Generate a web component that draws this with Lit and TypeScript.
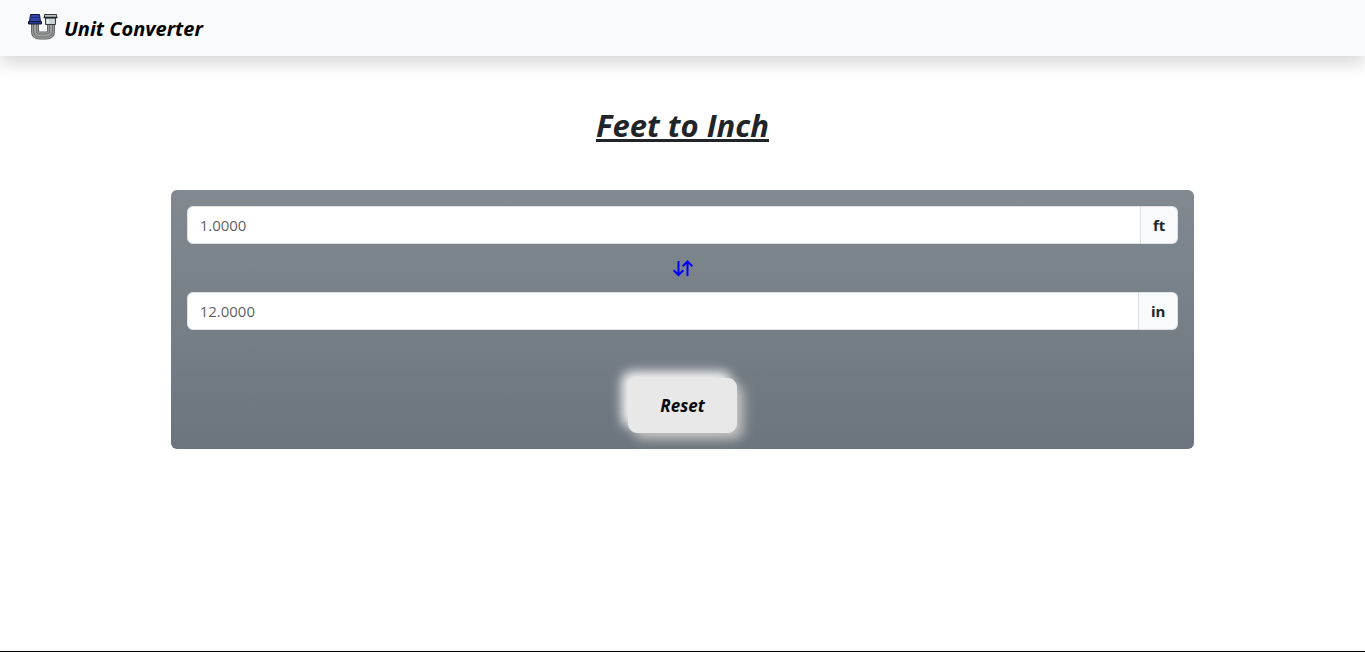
import { LitElement, html, css } from "lit";
import { customElement, state } from "lit/decorators.js";

@customElement("app-root")
export class AppRoot extends LitElement {
  static styles = css`
    :host {
      display: flex;
      flex-direction: column;
      box-sizing: border-box;
      min-height: 100vh;
      border-bottom: 1px solid #000;
      background: #fff;
      color: #212529;
      font-family: "Segoe UI", "Open Sans", "Noto Sans", sans-serif;
      font-size: 16px;
      line-height: 24px;
    }
    * {
      box-sizing: border-box;
    }
    .navbar {
      display: flex;
      align-items: center;
      height: 56px;
      padding: 2px 28px 0;
      background: #f8fafc;
      box-shadow: 0 8px 16px rgba(0, 0, 0, 0.15);
    }
    .brand {
      display: flex;
      align-items: center;
      gap: 6px;
      color: #000;
      font-size: 20px;
      font-weight: 700;
      font-style: italic;
      line-height: 30px;
      text-decoration: none;
    }
    .logo {
      width: 30px;
      height: 30px;
      margin-bottom: 4px;
    }
    .title {
      margin: 50px 0 46px;
      font-size: 31px;
      line-height: 38px;
      font-weight: 700;
      font-style: italic;
      text-align: center;
      text-decoration: underline;
      text-decoration-thickness: 3px;
      text-underline-offset: 2px;
      text-decoration-skip-ink: none;
    }
    .card {
      display: flex;
      flex-direction: column;
      align-items: center;
      width: 75%;
      margin: 0 auto;
      padding: 16px;
      border-radius: 6px;
      background: linear-gradient(180deg, rgba(255, 255, 255, 0.15), rgba(255, 255, 255, 0)) #6c757d;
    }
    .group {
      display: flex;
      width: 100%;
      height: 38px;
    }
    .field {
      flex: 1;
      min-width: 0;
      padding: 6px 12px;
      border: 1px solid #dee2e6;
      border-radius: 6px 0 0 6px;
      background: #fff;
      color: #212529;
      font: inherit;
      font-size: 15px;
      outline: none;
    }
    .field::placeholder {
      color: rgba(33, 37, 41, 0.75);
      opacity: 1;
    }
    .unit {
      padding: 6px 12px;
      border: 1px solid #dee2e6;
      border-left: 0;
      border-radius: 0 6px 6px 0;
      background: #f8fafc;
      font-weight: 700;
      font-size: 15px;
    }
    .swap {
      display: block;
      height: 24px;
      margin: 12px 0;
      padding: 0;
      border: 0;
      background: none;
      color: #00f;
      cursor: pointer;
    }
    .swap svg {
      display: block;
      width: 24px;
      height: 24px;
    }
    .reset {
      height: 55px;
      margin-top: 48px;
      padding: 0 31px;
      border: 1px solid #e8e8e8;
      border-radius: 9px;
      background: #e8e8e8;
      box-shadow: 6px 6px 12px #c5c5c5, -6px -6px 12px #fff;
      color: #090909;
      font: inherit;
      font-size: 17px;
      font-weight: 700;
      font-style: italic;
      cursor: pointer;
    }
  `;

  @state() private feet = "";
  @state() private inches = "";
  @state() private flipped = false;

  private setFeet(e: Event) {
    this.feet = (e.target as HTMLInputElement).value;
    this.inches = this.feet ? (Number(this.feet) * 12).toFixed(4) : "";
  }

  private setInches(e: Event) {
    this.inches = (e.target as HTMLInputElement).value;
    this.feet = this.inches ? (Number(this.inches) / 12).toFixed(4) : "";
  }

  private reset() {
    this.feet = "";
    this.inches = "";
  }

  private feetRow() {
    return html`<div class="group">
      <input class="field" id="feet" placeholder="1.0000" inputmode="decimal" .value=${this.feet} @input=${this.setFeet} />
      <label class="unit" for="feet">ft</label>
    </div>`;
  }

  private inchRow() {
    return html`<div class="group">
      <input class="field" id="inch" placeholder="12.0000" inputmode="decimal" .value=${this.inches} @input=${this.setInches} />
      <label class="unit" for="inch">in</label>
    </div>`;
  }

  render() {
    return html`
      <nav class="navbar">
        <a class="brand" href="#">
          <svg class="logo" viewBox="0 0 30 30" fill="none" aria-hidden="true">
            <path d="M7 12v7q0 4.500 5 4.500h6q5 0 5-4.500v-7" stroke="#55585a" stroke-width="8" />
            <path d="M7 12v7q0 4.500 5 4.500h6q5 0 5-4.500v-7" stroke="#999" stroke-width="6.5" />
            <path d="M7 12v7q0 4.500 5 4.500h6q5 0 5-4.500v-7" stroke="#666" stroke-width="3.500" />
            <path d="M7 12v7q0 4.500 5 4.500h6q5 0 5-4.500v-7" stroke="#a2a2a2" stroke-width="2" />
            <path d="M2.500 2.500h9l1 7H1.500z" fill="#3547ae" stroke="#111733" />
            <path d="M.5 9.500h13v2.500H.5z" fill="#2b3a94" stroke="#111733" />
            <path d="M2 5.500h10" stroke="#222e75" />
            <path d="M17.500 6h10v6.500h-10z" fill="#c9d4d8" stroke="#34393b" />
            <path d="M16.500 2.500h12v3h-12z" fill="#b9c0c4" stroke="#34393b" />
            <path d="M15.500 5.500h14" stroke="#24292b" stroke-width="1.500" />
            <path d="M20 7.500v4" stroke="#e5ecef" stroke-width="2" />
          </svg>
          <span>Unit Converter</span>
        </a>
      </nav>
      <h1 class="title">Feet to Inch</h1>
      <main class="card">
        ${this.flipped ? this.inchRow() : this.feetRow()}
        <button class="swap" aria-label="Swap units" @click=${() => (this.flipped = !this.flipped)}>
          <svg viewBox="0 0 24 24" fill="none" stroke="currentColor" stroke-width="2">
            <path d="M7.500 5v14M2.700 14.200l4.800 4.800 4.800-4.800M16.500 20V6M11.700 10.300l4.800-4.800 4.800 4.800" />
          </svg>
        </button>
        ${this.flipped ? this.feetRow() : this.inchRow()}
        <button class="reset" @click=${this.reset}>Reset</button>
      </main>
    `;
  }
}
